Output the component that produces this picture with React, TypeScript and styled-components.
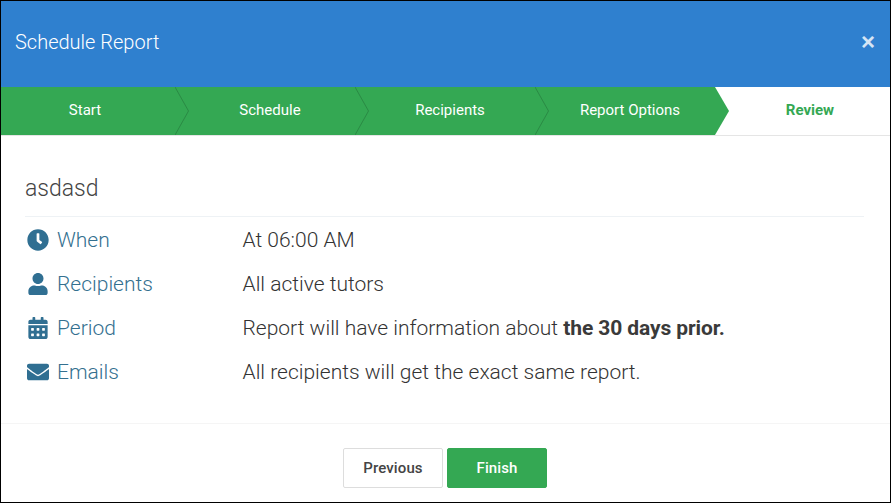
import React from "react";
import styled, { createGlobalStyle } from "styled-components";
import { FaClock, FaUser, FaCalendarAlt, FaEnvelope } from "react-icons/fa";

const Global = createGlobalStyle`
  html, body { margin: 0; padding: 0; background: #fff; }
  * { box-sizing: border-box; }
`;

const Modal = styled.div`
  width: 891px;
  height: 503px;
  border: 1px solid #000;
  overflow: hidden;
  font-family: Roboto, "Liberation Sans", sans-serif;
  color: #333;
  display: flex;
  flex-direction: column;
  background: #fff;
`;

const Header = styled.header`
  height: 86px;
  flex: none;
  background: #2f80cf;
  display: flex;
  align-items: center;
  justify-content: space-between;
  padding: 0 15px 5px 14px;
`;

const Title = styled.h4`
  margin: 0;
  font-size: 20px;
  font-weight: 300;
  color: #fff;
`;

const Close = styled.span`
  font-size: 24px;
  font-weight: 700;
  line-height: 1;
  color: #fff;
  opacity: 0.8;
  font-family: "Liberation Sans", sans-serif;
`;

const Steps = styled.div`
  flex: none;
  height: 49px;
  display: flex;
  border-bottom: 1px solid #e5e5e5;
`;

const Step = styled.div<{ $active?: boolean; $width: number; $padLeft?: number; $padRight?: number }>`
  position: relative;
  flex: none;
  width: ${(p) => p.$width}px;
  height: 48px;
  padding: 0 ${(p) => p.$padRight ?? 0}px 2px ${(p) => p.$padLeft ?? 0}px;
  display: flex;
  align-items: center;
  justify-content: center;
  font-size: 15px;
  font-weight: ${(p) => (p.$active ? 700 : 400)};
  color: ${(p) => (p.$active ? "#34a853" : "#fff")};
  background: ${(p) => (p.$active ? "#fff" : "#34a853")};
`;

const Chevron = styled.svg<{ $offset: number }>`
  position: absolute;
  top: 0;
  right: ${(p) => p.$offset}px;
  width: 14px;
  height: 48px;
  z-index: 1;
`;

const Body = styled.main`
  flex: none;
  height: 288px;
  padding: 39px 26px 0 24px;
  border-bottom: 1px solid #f5f5f5;
`;

const Name = styled.h3`
  margin: 0;
  height: 42px;
  font-size: 23px;
  font-weight: 300;
  line-height: 28px;
  color: #444;
  border-bottom: 1px solid #eef2f5;
`;

const Rows = styled.div`
  display: flex;
  flex-direction: column;
  padding-top: 1px;
`;

const Row = styled.div`
  height: 44px;
  display: grid;
  grid-template-columns: 217.5px 1fr;
  align-items: center;
  font-size: 21px;
  font-weight: 300;
`;

const Label = styled.div`
  display: flex;
  align-items: center;
  color: #34708f;
`;

const IconBox = styled.span`
  width: 32px;
  display: flex;
  justify-content: center;
  padding-right: 6px;
  font-size: 22px;
  color: #306f92;
`;

const Value = styled.div`
  color: #333;
`;

const Strong = styled.strong`
  font-weight: 700;
  letter-spacing: -0.1px;
  color: #3a3a3a;
`;

const Footer = styled.footer`
  flex: 1;
  display: flex;
  justify-content: center;
  gap: 4px;
  padding: 24px 2px 0 0;
`;

const Button = styled.button<{ $primary?: boolean }>`
  width: 100px;
  height: 40px;
  padding: 0 0 0 1px;
  font-family: inherit;
  font-size: 15px;
  font-weight: 500;
  letter-spacing: 0.1px;
  border-radius: 2px;
  border: 1px solid ${(p) => (p.$primary ? "#34a853" : "#ddd")};
  color: ${(p) => (p.$primary ? "#fff" : "#444")};
  background: ${(p) => (p.$primary ? "#34a853" : "#fff")};
`;

const stepList = [
  { label: "Start", width: 179, padRight: 11 },
  { label: "Schedule", width: 180 },
  { label: "Recipients", width: 180 },
  { label: "Report Options", width: 175, padLeft: 5 },
  { label: "Review", width: 185, padLeft: 5 },
];

const rows = [
  { icon: <FaClock />, label: "When", value: <>At 06:00 AM</> },
  { icon: <FaUser />, label: "Recipients", value: <>All active tutors</> },
  {
    icon: <FaCalendarAlt />,
    label: "Period",
    value: (
      <>
        Report will have information about <Strong>the 30 days prior.</Strong>
      </>
    ),
  },
  { icon: <FaEnvelope />, label: "Emails", value: <>All recipients will get the exact same report.</> },
];

export default function App() {
  return (
    <>
      <Global />
      <Modal>
        <Header>
          <Title>Schedule Report</Title>
          <Close>×</Close>
        </Header>
        <Steps>
          {stepList.map((s, i) => (
            <Step
              key={s.label}
              $active={i === 4}
              $width={s.width}
              $padLeft={s.padLeft}
              $padRight={s.padRight}
            >
              {s.label}
              {i < 3 && (
                <Chevron $offset={-9} viewBox="0 0 14 48">
                  <path d="M0 0L13.5 24L0 48" fill="#34a853" stroke="#2b8a45" strokeWidth="1" />
                </Chevron>
              )}
              {i === 3 && (
                <Chevron $offset={-14} viewBox="0 0 14 48">
                  <path d="M0 0L14 24L0 48Z" fill="#34a853" />
                </Chevron>
              )}
            </Step>
          ))}
        </Steps>
        <Body>
          <Name>asdasd</Name>
          <Rows>
            {rows.map((r) => (
              <Row key={r.label}>
                <Label>
                  <IconBox>{r.icon}</IconBox>
                  {r.label}
                </Label>
                <Value>{r.value}</Value>
              </Row>
            ))}
          </Rows>
        </Body>
        <Footer>
          <Button>Previous</Button>
          <Button $primary>Finish</Button>
        </Footer>
      </Modal>
    </>
  );
}
